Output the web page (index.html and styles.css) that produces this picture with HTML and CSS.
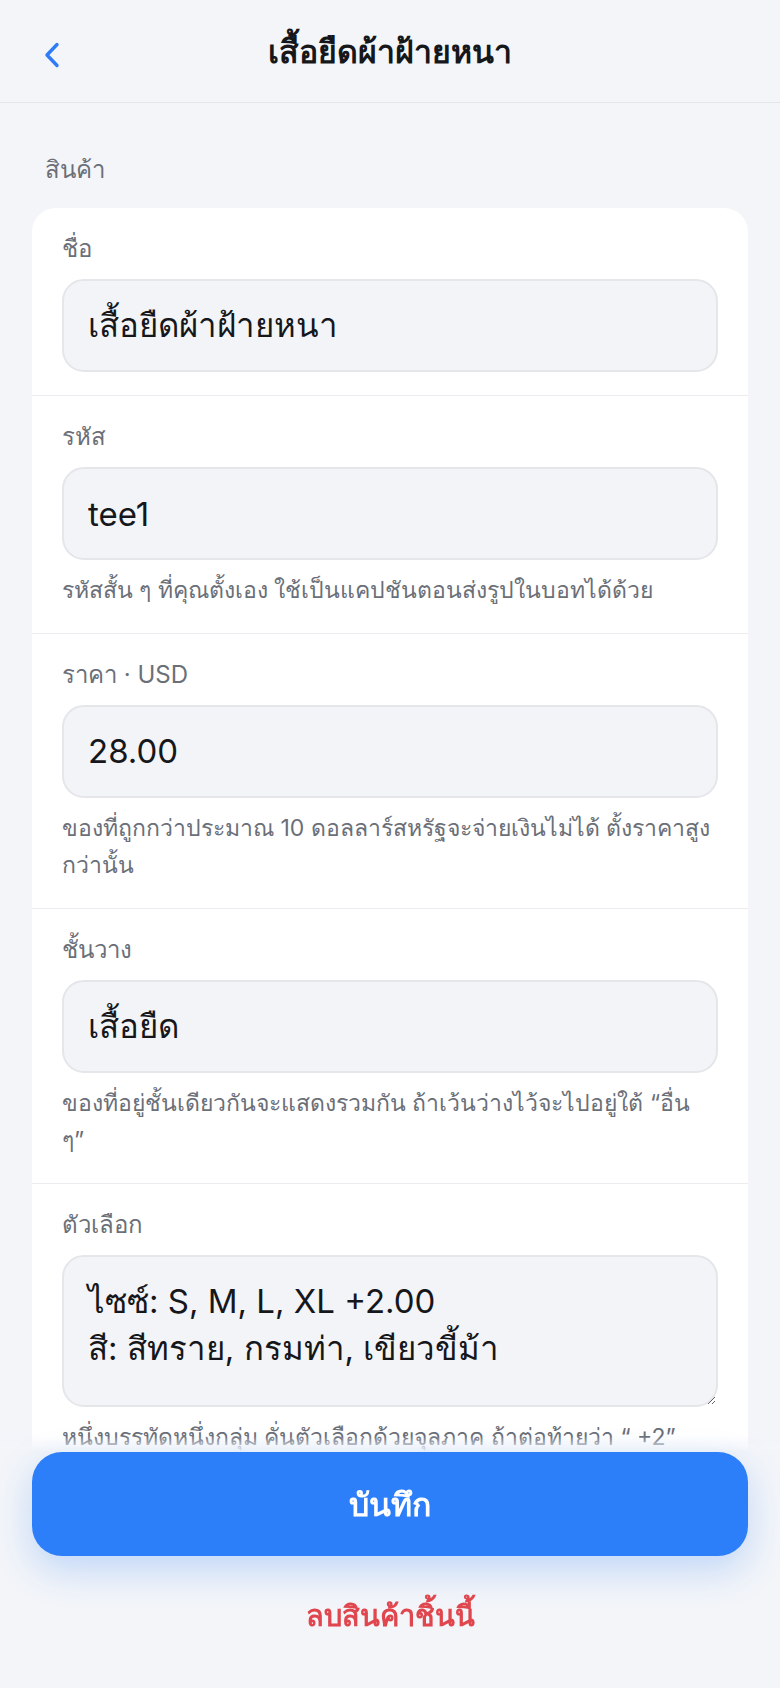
FILE: index.html
```html
<!DOCTYPE html>
<html lang="th">

<head>
    <meta charset="UTF-8">
    <meta name="viewport" content="width=device-width, initial-scale=1.0">
    <title>แก้ไขสินค้า</title>
    <link rel="stylesheet" href="styles.css">
</head>

<body>
    <div class="topbar">
        <a class="back" href="#">
            <svg width="17" height="26" viewBox="0 0 17 26">
                <polyline points="14,2.5 4,13 14,23.5" fill="none" stroke="#2f7cf6" stroke-width="3.4" stroke-linecap="round" stroke-linejoin="round" />
            </svg>
        </a>
        <h1 class="title">เสื้อยืดผ้าฝ้ายหนา</h1>
        <div></div>
    </div>

    <div class="page">
        <div class="section-label">สินค้า</div>

        <div class="card">
            <div class="row">
                <label class="label" for="name">ชื่อ</label>
                <input class="field" type="text" id="name" value="เสื้อยืดผ้าฝ้ายหนา">
            </div>
            <div class="row">
                <label class="label" for="code">รหัส</label>
                <input class="field" type="text" id="code" value="tee1">
                <p class="hint">รหัสสั้น ๆ ที่คุณตั้งเอง ใช้เป็นแคปชันตอนส่งรูปในบอทได้ด้วย</p>
            </div>
            <div class="row">
                <label class="label" for="price">ราคา · USD</label>
                <input class="field" type="text" id="price" value="28.00">
                <p class="hint">ของที่ถูกกว่าประมาณ 10 ดอลลาร์สหรัฐจะจ่ายเงินไม่ได้ ตั้งราคาสูงกว่านั้น</p>
            </div>
            <div class="row">
                <label class="label" for="shelf">ชั้นวาง</label>
                <input class="field" type="text" id="shelf" value="เสื้อยืด">
                <p class="hint">ของที่อยู่ชั้นเดียวกันจะแสดงรวมกัน ถ้าเว้นว่างไว้จะไปอยู่ใต้ “อื่น ๆ”</p>
            </div>
            <div class="row">
                <label class="label" for="options">ตัวเลือก</label>
                <textarea class="field area" id="options">ไซซ์: S, M, L, XL +2.00
สี: สีทราย, กรมท่า, เขียวขี้ม้า</textarea>
                <p class="hint">หนึ่งบรรทัดหนึ่งกลุ่ม คั่นตัวเลือกด้วยจุลภาค ถ้าต่อท้ายว่า “ +2” ราคาตัวเลือกนั้นจะเพิ่มขึ้นตามนั้น</p>
            </div>
        </div>
    </div>

    <div class="bottombar">
        <button class="save">บันทึก</button>
        <button class="delete">ลบสินค้าชิ้นนี้</button>
    </div>
</body>

</html>
```

FILE: styles.css
```css
* {
    margin: 0;
    padding: 0;
    box-sizing: border-box;
}
body {
    background-color: #f3f5f9;
    font-family: Inter, "Noto Sans", sans-serif;
    color: #16171a;
}
.topbar {
    height: 103px;
    display: grid;
    grid-template-columns: 1fr auto 1fr;
    align-items: center;
    border-bottom: 1px solid #e3e6eb;
}
.back {
    display: flex;
    padding-left: 43px;
    padding-top: 8px;
}
.title {
    font-size: 32px;
    font-weight: 700;
    color: #16171a;
}
.page {
    padding: 52px 32px 300px;
}
.section-label {
    padding-left: 13px;
    font-size: 24px;
    line-height: 30px;
    color: #6b6f78;
    margin-bottom: 23px;
}
.card {
    background-color: #fff;
    border-radius: 24px;
}
.row {
    padding: 24px 30px 23px;
    border-top: 1px solid #eaecf0;
}
.row:first-child {
    border-top: none;
}
.label {
    display: block;
    font-size: 24px;
    line-height: 34px;
    color: #6b6f78;
    margin-bottom: 13px;
}
.field {
    display: block;
    width: 100%;
    height: 93px;
    padding: 0 24px;
    border: 2px solid #e4e6ea;
    border-radius: 22px;
    background-color: #f3f4f7;
    font-family: inherit;
    font-size: 33px;
    color: #16171a;
    outline: none;
}
.area {
    height: 152px;
    padding: 21px 24px;
    line-height: 47px;
    resize: vertical;
}
.hint {
    margin-top: 12px;
    font-size: 23px;
    line-height: 37.5px;
    color: #6b6f78;
}
.bottombar {
    position: fixed;
    left: 0;
    right: 0;
    bottom: 0;
    padding: 16px 32px 52px;
    background: linear-gradient(to bottom, rgba(243, 245, 249, 0), #f3f5f9 16px);
    display: flex;
    flex-direction: column;
    align-items: center;
}
.save {
    width: 100%;
    height: 104px;
    border: none;
    border-radius: 30px;
    background-color: #2d7ff9;
    color: #fff;
    font-family: inherit;
    font-size: 32px;
    font-weight: 700;
    box-shadow: 0 14px 36px rgba(45, 127, 249, 0.25);
}
.delete {
    margin-top: 40px;
    border: none;
    background: none;
    color: #e0464e;
    font-family: inherit;
    font-size: 29px;
    font-weight: 700;
    line-height: 40px;
}
```
